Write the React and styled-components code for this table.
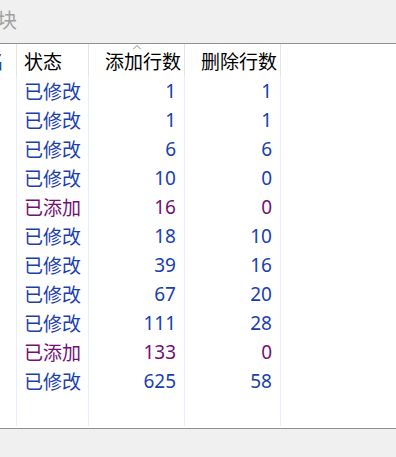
import styled, { createGlobalStyle } from 'styled-components';

const Global = createGlobalStyle`
  body {
    margin: 0;
    background: #f0f0f0;
    font-family: "Noto Sans", "Noto Sans CJK SC", sans-serif;
  }
`;

const Wrap = styled.div`
  width: 396px;
  height: 457px;
  display: flex;
  flex-direction: column;
  overflow: hidden;
`;

const TopBar = styled.div`
  height: 43px;
  background: #f0f0f0;
  border-bottom: 1px solid #8f8f8f;
  display: flex;
  align-items: center;
  overflow: hidden;
  font-size: 20px;
  color: #a0a0a0;
  font-family: "Noto Sans CJK SC", sans-serif;

  span {
    margin-left: -3px;
    margin-top: -4px;
  }
`;

const Grid = styled.div`
  height: 384px;
  background: #fff;
  display: flex;
  overflow: hidden;
`;

const Column = styled.div`
  width: ${(p) => p.w}px;
  flex: none;
  display: flex;
  flex-direction: column;
  overflow: hidden;
`;

const HeadCell = styled.div`
  position: relative;
  height: 32px;
  box-sizing: border-box;
  border-right: 1px solid #e5e5e5;
  display: flex;
  align-items: center;
  justify-content: ${(p) => (p.right ? 'flex-end' : 'flex-start')};
  padding: ${(p) => (p.right ? '0 3px 0 0' : `0 0 0 ${p.indent ?? 7}px`)};
  font-size: 19px;
  color: ${(p) => p.color || '#000'};
  white-space: nowrap;
  overflow: hidden;
  font-family: "Noto Sans CJK SC", sans-serif;
`;

const Clipped = styled.span`
  margin-left: -15px;
`;

const SortArrow = styled.svg`
  position: absolute;
  top: 1px;
  left: 50%;
  transform: translateX(-50%);
`;

const Body = styled.div`
  flex: 1;
  border-right: 1px solid #e4effb;
  margin-bottom: 2px;
`;

const Cell = styled.div`
  height: 29px;
  display: flex;
  align-items: center;
  justify-content: ${(p) => (p.right ? 'flex-end' : 'flex-start')};
  padding: ${(p) => (p.right ? '0 8px 0 0' : '0 0 0 7px')};
  font-size: 19px;
  color: ${(p) => (p.added ? '#740f74' : '#1b40ad')};
  white-space: nowrap;
  font-family: ${(p) => (p.right ? '"Noto Sans", sans-serif' : '"Noto Sans CJK SC", sans-serif')};
`;

const Bottom = styled.div`
  flex: 1;
  background: #f0f0f0;
  border-top: 1px solid #8f8f8f;
`;

const rows = [
  ['已修改', 1, 1],
  ['已修改', 1, 1],
  ['已修改', 6, 6],
  ['已修改', 10, 0],
  ['已添加', 16, 0],
  ['已修改', 18, 10],
  ['已修改', 39, 16],
  ['已修改', 67, 20],
  ['已修改', 111, 28],
  ['已添加', 133, 0],
  ['已修改', 625, 58],
];

const App = () => {
  return (
    <Wrap>
      <Global />
      <TopBar>
        <span>块</span>
      </TopBar>
      <Grid>
        <Column w={17}>
          <HeadCell color="#1b40ad" indent={0}>
            <Clipped>名</Clipped>
          </HeadCell>
          <Body />
        </Column>
        <Column w={72}>
          <HeadCell>状态</HeadCell>
          <Body>
            {rows.map((r, i) => (
              <Cell key={i} added={r[0] === '已添加'}>
                {r[0]}
              </Cell>
            ))}
          </Body>
        </Column>
        <Column w={96}>
          <HeadCell right>
            <SortArrow width="9" height="5" viewBox="0 0 9 5">
              <path d="M0.5 4.5 L4.5 0.5 L8.5 4.5" fill="none" stroke="#8a8a8a" strokeWidth="1" />
            </SortArrow>
            添加行数
          </HeadCell>
          <Body>
            {rows.map((r, i) => (
              <Cell key={i} right added={r[0] === '已添加'}>
                {r[1]}
              </Cell>
            ))}
          </Body>
        </Column>
        <Column w={96}>
          <HeadCell right>删除行数</HeadCell>
          <Body>
            {rows.map((r, i) => (
              <Cell key={i} right added={r[0] === '已添加'}>
                {r[2]}
              </Cell>
            ))}
          </Body>
        </Column>
      </Grid>
      <Bottom />
    </Wrap>
  );
};

export default App;
